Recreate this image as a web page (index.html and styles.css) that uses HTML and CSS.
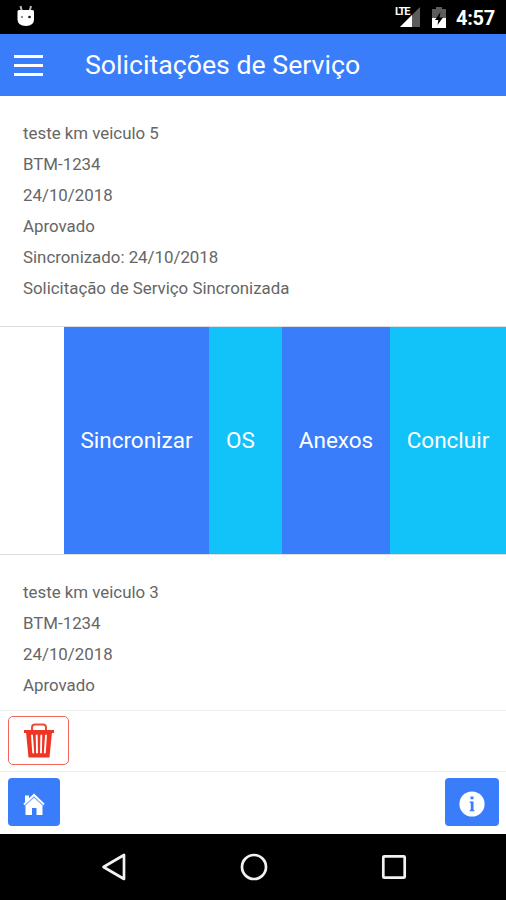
FILE: index.html
```html
<!DOCTYPE html>
<html lang="pt-BR">
<head>
    <meta charset="UTF-8">
    <meta name="viewport" content="width=device-width, initial-scale=1.0">
    <title>Solicitações de Serviço</title>
    <link rel="stylesheet" href="styles.css">
</head>
<body>
    <div class="status-bar">
        <svg class="android" width="20" height="22" viewBox="0 0 20 22">
            <path d="M4.5 1l1.300 5M15 1l-1.300 5" stroke="#bbb" stroke-width="2"/>
            <path d="M1.500 6.500q0-1.500 1.500-1.500h13.500q1.500 0 1.500 1.500v8q0 6.500-8.200 6.500t-8.300-6.500z" fill="#fff"/>
            <circle cx="6" cy="12" r="1.100" fill="#777"/>
            <circle cx="13.500" cy="12" r="1.300" fill="#111"/>
        </svg>
        <div class="status-right">
            <div class="signal">
                <span class="lte">LTE</span>
                <svg width="22" height="20" viewBox="0 0 22 20">
                    <path d="M21 0v20H1z" fill="#5c5c5c"/>
                    <path d="M13 8v12H1z" fill="#fff"/>
                </svg>
            </div>
            <svg class="battery" width="14" height="21" viewBox="0 0 14 21">
                <path d="M4 0h6v2h4v9H0V2h4z" fill="#5c5c5c"/>
                <path d="M0 11h14v10H0z" fill="#fff"/>
                <path d="M8.500 5L3 13h3.300L5.500 18 11 10.500H7.500z" fill="#000"/>
            </svg>
            <span class="clock">4:57</span>
        </div>
    </div>

    <header class="header">
        <button class="menu-btn" aria-label="Menu"><span></span><span></span><span></span></button>
        <h1>Solicitações de Serviço</h1>
    </header>

    <main class="list">
        <div class="item">
            <p>teste km veiculo 5</p>
            <p>BTM-1234</p>
            <p>24/10/2018</p>
            <p>Aprovado</p>
            <p>Sincronizado: 24/10/2018</p>
            <p>Solicitação de Serviço Sincronizada</p>
        </div>
        <div class="item-options">
            <button class="option sync">Sincronizar</button>
            <button class="option os">OS</button>
            <button class="option attach">Anexos</button>
            <button class="option finish">Concluir</button>
        </div>
        <div class="item">
            <p>teste km veiculo 3</p>
            <p>BTM-1234</p>
            <p>24/10/2018</p>
            <p>Aprovado</p>
        </div>
    </main>

    <div class="toolbar trash-bar">
        <button class="trash-btn" aria-label="Excluir">
            <svg width="32" height="36" viewBox="0 0 32 36">
                <path d="M9 7V4.500q0-3 3-3h8q3 0 3 3V7" fill="none" stroke="#ee4a3c" stroke-width="2"/>
                <path d="M1 7h30v3H1z" fill="#ee3526"/>
                <path d="M3 9h26l-2.500 25.500h-21z" fill="#f03424"/>
                <path d="M9 12.500l1.200 17M13.700 12.500l.3 17M18.300 12.500l-.3 17M23 12.500l-1.200 17" stroke="#fff" stroke-width="1.900" stroke-linecap="round"/>
            </svg>
        </button>
    </div>
    <footer class="toolbar footer">
        <button class="btn home-btn" aria-label="Início">
            <svg width="22" height="23" viewBox="0 0 22 23">
                <path d="M2 2.500h4V6L2 9.500z" fill="#fff"/>
                <path d="M1 11.500L11 2l10 9.500" fill="none" stroke="#fff" stroke-width="2"/>
                <path d="M2.500 12.500L11 4.500l8.500 8V22h-6v-7h-4.500v7h-6.500z" fill="#fff"/>
                <path d="M1.500 13.200L11 4.500l9.500 8.700" fill="none" stroke="#9bbcff" stroke-width=".8"/>
            </svg>
        </button>
        <button class="btn info-btn" aria-label="Informações">
            <svg width="26" height="26" viewBox="0 0 26 26">
                <circle cx="13" cy="13" r="12.600" fill="#fff"/>
                <path d="M11.500 5.500h3v2.800h-3zM10.800 10.500h3.700v8.200h.8v1.600h-4.500v-1.600h1v-6.600h-1z" fill="#397dfa"/>
            </svg>
        </button>
    </footer>

    <nav class="nav-bar">
        <svg width="26" height="30" viewBox="0 0 26 30">
            <path d="M23 3v24L2.500 15z" fill="none" stroke="#f2f2f2" stroke-width="2.700" stroke-linejoin="round"/>
        </svg>
        <svg width="30" height="30" viewBox="0 0 30 30">
            <circle cx="15" cy="15" r="12" fill="none" stroke="#f2f2f2" stroke-width="2.700"/>
        </svg>
        <svg width="26" height="26" viewBox="0 0 26 26">
            <rect x="2.300" y="2.300" width="21.400" height="21.400" rx="1" fill="none" stroke="#f2f2f2" stroke-width="2.700"/>
        </svg>
    </nav>
</body>
</html>
```

FILE: styles.css
```css
* {
    box-sizing: border-box;
}
body {
    display: flex;
    flex-direction: column;
    width: 506px;
    height: 900px;
    margin: 0;
    overflow: hidden;
    background-color: #fff;
    font-family: Roboto, sans-serif;
}
button {
    padding: 0;
    border: none;
    font-family: inherit;
    cursor: pointer;
}
svg {
    display: block;
    flex: none;
}
.status-bar {
    display: flex;
    flex: none;
    justify-content: space-between;
    align-items: flex-start;
    height: 34px;
    padding: 5px 11px 0 16px;
    background-color: #000;
    color: #fff;
}
.status-right {
    display: flex;
    align-items: flex-start;
    padding-top: 2px;
}
.signal {
    position: relative;
    margin-right: 11px;
}
.lte {
    position: absolute;
    left: -4px;
    top: -1px;
    font-size: 11px;
    line-height: 12px;
    font-weight: 700;
    letter-spacing: -1.2px;
    background-color: #000;
}
.battery {
    margin-right: 10px;
}
.clock {
    width: 39px;
    font-size: 20px;
    line-height: 23px;
    font-weight: 700;
    letter-spacing: -0.3px;
    white-space: nowrap;
}
.header {
    display: flex;
    flex: none;
    align-items: center;
    height: 62px;
    padding-left: 14px;
    background-color: #397dfa;
    color: #fff;
}
.menu-btn {
    display: flex;
    flex-direction: column;
    gap: 6px;
    width: 29px;
    margin-right: 42px;
    background: none;
}
.menu-btn span {
    height: 3px;
    background-color: #fff;
}
.header h1 {
    margin: 0;
    font-size: 26.7px;
    font-weight: 400;
}
.list {
    flex: 1;
    min-height: 0;
    overflow: hidden;
}
.item {
    height: 231px;
    padding: 22px 23px 0;
    border-bottom: 1px solid #dedede;
}
.item p {
    margin: 0;
    height: 31px;
    font-size: 16.85px;
    line-height: 31px;
    color: #666;
}
.item-options {
    display: flex;
    height: 228px;
    padding-left: 64px;
    border-bottom: 1px solid #dedede;
}
.option {
    padding-bottom: 2px;
    font-size: 22.5px;
    color: #fff;
}
.sync {
    width: 145px;
    background-color: #397dfa;
}
.os {
    width: 73px;
    padding-right: 10px;
    background-color: #12c3f9;
}
.attach {
    width: 108px;
    background-color: #397dfa;
}
.finish {
    width: 116px;
    background-color: #12c3f9;
}
.toolbar {
    display: flex;
    flex: none;
    align-items: flex-start;
    border-top: 1px solid #eee;
    background-color: #fff;
}
.trash-bar {
    height: 61px;
    padding: 5px 8px;
}
.trash-btn {
    display: flex;
    justify-content: center;
    align-items: center;
    width: 61px;
    height: 49px;
    border: 1.5px solid #f0665c;
    border-radius: 5px;
    background: none;
}
.footer {
    justify-content: space-between;
    height: 63px;
    padding: 6px 7px 0 8px;
}
.btn {
    display: flex;
    justify-content: center;
    align-items: center;
    height: 48px;
    border-radius: 4px;
    background-color: #397dfa;
}
.home-btn {
    width: 52px;
    padding-top: 4px;
}
.info-btn {
    width: 54px;
    padding-top: 4px;
}
.nav-bar {
    display: flex;
    flex: none;
    justify-content: space-between;
    align-items: center;
    height: 66px;
    padding: 0 99px 0 101px;
    background-color: #000;
}
```
